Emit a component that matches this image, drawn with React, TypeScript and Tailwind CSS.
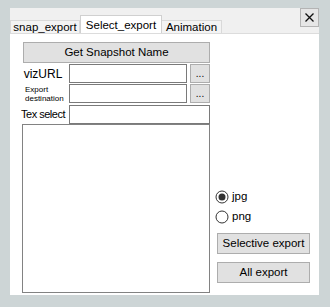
import React from "react";

function Radio({ checked, label }: { checked: boolean; label: string }) {
  return (
    <div className="flex items-center h-[16px]">
      <svg width="14" height="14" viewBox="0 0 14 14" className="shrink-0">
        <circle cx="7" cy="7" r="6" fill="#ffffff" stroke="#333333" strokeWidth="1" />
        {checked && <circle cx="7" cy="7" r="3.5" fill="#333333" />}
      </svg>
      <span className="ml-[3px] text-[11.5px] leading-none text-black">{label}</span>
    </div>
  );
}

function WinButton({ children, className }: { children: React.ReactNode; className: string }) {
  return (
    <div
      className={
        "flex items-center justify-center bg-[#e1e1e1] border border-[#adadad] text-black leading-none " +
        className
      }
    >
      {children}
    </div>
  );
}

export default function App() {
  return (
    <div
      className="w-[330px] h-[307px] bg-[#cdd5d6] pt-[8px] pl-[10px]"
      style={{ fontFamily: '"Liberation Sans", Arial, sans-serif' }}
    >
      <div className="w-[309px] h-[287px] flex flex-col bg-[#f0f0f0]">
        {/* tab strip */}
        <div className="h-[25px] flex items-end relative z-10">
          <div className="w-[70px] h-[13px] flex items-start justify-center border border-b-0 border-[#d9d9d9] bg-[#f3f3f3] text-[11.5px] leading-[12px] text-black">
            <span className="mt-[0px]">snap_export</span>
          </div>
          <div className="w-[82px] h-[18px] flex items-start justify-center border border-b-0 border-[#d0d0d0] bg-white text-[11.5px] leading-[12px] text-black">
            <span className="mt-[3px]">Select_export</span>
          </div>
          <div className="w-[60px] h-[13px] flex items-start justify-center border border-b-0 border-l-0 border-[#d9d9d9] bg-[#f3f3f3] text-[11.5px] leading-[12px] text-black">
            <span className="mt-[0px]">Animation</span>
          </div>
          <div className="ml-auto self-start w-[19px] h-[19px] flex items-center justify-center bg-[#e6e6e6] border border-[#b4b4b4]">
            <svg width="11" height="11" viewBox="0 0 11 11">
              <path d="M1.5 1.5 L9.5 9.5 M9.5 1.5 L1.5 9.5" stroke="#111" strokeWidth="1.3" />
            </svg>
          </div>
        </div>

        {/* content */}
        <div className="flex-1 flex bg-white border-t border-[#dcdcdc] pl-[7px] pt-[8px] pb-[2px]">
          {/* left column */}
          <div className="w-[193px] flex flex-col">
            <WinButton className="ml-[6px] w-[187px] h-[21px] text-[11.5px]">Get Snapshot Name</WinButton>

            <div className="mt-[1px] h-[19px] flex">
              <div className="w-[52px] flex items-center justify-center text-[12px] text-black">vizURL</div>
              <div className="w-[118px] h-[19px] border border-[#7a7a7a] bg-white" />
              <WinButton className="ml-[3px] w-[20px] h-[19px] text-[10px]">...</WinButton>
            </div>

            <div className="mt-[1px] h-[19px] flex">
              <div className="w-[52px] flex flex-col justify-center pl-[8px] text-[8px] leading-[9px] text-black">
                <span>Export</span>
                <span>destination</span>
              </div>
              <div className="w-[118px] h-[19px] border border-[#7a7a7a] bg-white" />
              <WinButton className="ml-[3px] w-[20px] h-[19px] text-[10px]">...</WinButton>
            </div>

            <div className="mt-[2px] h-[19px] flex">
              <div className="w-[52px] flex items-center justify-center text-[11px] tracking-[-0.5px] text-black whitespace-nowrap">
                Tex select
              </div>
              <div className="w-[141px] h-[19px] border border-[#7a7a7a] bg-white" />
            </div>

            <div className="ml-[5px] w-[188px] flex-1 border border-[#828282] bg-white" />
          </div>

          {/* right column */}
          <div className="ml-[5px] flex flex-col justify-end pb-[10px]">
            <Radio checked={true} label="jpg" />
            <div className="mt-[4px]">
              <Radio checked={false} label="png" />
            </div>
            <WinButton className="mt-[8px] ml-[2px] w-[93px] h-[21px] text-[11.5px]">Selective export</WinButton>
            <WinButton className="mt-[8px] ml-[2px] w-[93px] h-[21px] text-[11.5px]">All export</WinButton>
          </div>
        </div>
      </div>
    </div>
  );
}
